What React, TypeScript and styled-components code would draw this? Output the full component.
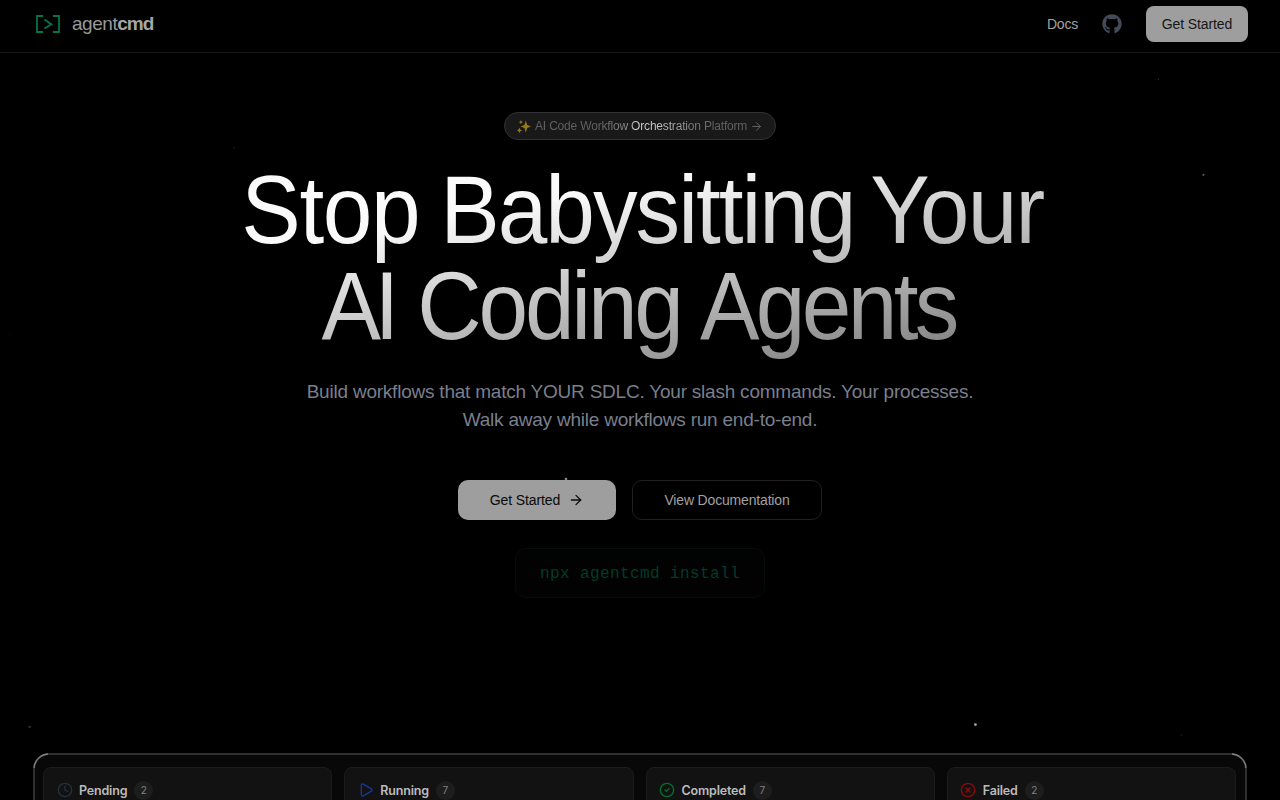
import * as React from 'react';
import styled, { createGlobalStyle } from 'styled-components';
import { ArrowRight, CircleCheck, CircleX, Clock, Play } from 'lucide-react';
import { FaGithub } from 'react-icons/fa';

const STARS = [
  { x: 1203.5, y: 174.8, r: 1.1, color: '#5c5c5c' },
  { x: 1158.5, y: 79.3, r: 0.7, color: '#2c2c2c' },
  { x: 234, y: 147.7, r: 0.7, color: '#262626' },
  { x: 10, y: 334, r: 0.6, color: '#161616' },
  { x: 30.5, y: 22, r: 0.6, color: '#161616' },
  { x: 566, y: 479, r: 1.3, color: '#8a8a8a' },
  { x: 975.4, y: 724.6, r: 1.4, color: '#a6a6a6' },
  { x: 29.7, y: 726.8, r: 1.1, color: '#3a3a3a' },
  { x: 1181.3, y: 735, r: 0.8, color: '#262626' },
];

const COLUMNS = [
  { title: 'Pending', count: 2, color: '#262f40', Icon: Clock },
  { title: 'Running', count: 7, color: '#17369c', Icon: Play },
  { title: 'Completed', count: 7, color: '#04702f', Icon: CircleCheck },
  { title: 'Failed', count: 2, color: '#8e090d', Icon: CircleX },
];

const LogoMark = () => (
  <svg width="24" height="18" viewBox="0 0 24 18" fill="none" stroke="#04734f" strokeWidth="1.8">
    <path d="M7 1H1v16h6M17 1h6v16h-6" />
    <path d="M8.4 4.4l7 4.8-7 4.4" />
  </svg>
);

const Sparkles = () => (
  <svg width="14" height="13" viewBox="0 0 14 13" fill="#94791f">
    <path d="M8.8 .6L10.2 5l3.8 1.5-3.8 1.5-1.4 4.4L7.4 8 3.6 6.5 7.4 5z" />
    <path d="M3.9 0l.7 1.5 1.5.6-1.5.6-.7 1.5-.7-1.5-1.5-.6 1.5-.6z" />
    <path d="M2.4 7.6l.8 2 1.9.8-1.9.8-.8 2-.8-2-1.6-.8 1.6-.8z" />
  </svg>
);

const App: React.FC = () => {
  return (
    <S.Page>
      <GlobalStyle />
      <S.Sky width="1280" height="800" aria-hidden>
        {STARS.map(star => (
          <circle key={star.x} cx={star.x} cy={star.y} r={star.r} fill={star.color} />
        ))}
      </S.Sky>
      <S.Header>
        <S.Logo>
          <LogoMark />
          <S.LogoText>
            agent<b>cmd</b>
          </S.LogoText>
        </S.Logo>
        <S.Nav>
          <S.NavLink>Docs</S.NavLink>
          <FaGithub size={20} color="#454a59" />
          <S.NavButton>Get Started</S.NavButton>
        </S.Nav>
      </S.Header>
      <S.Hero>
        <S.Badge>
          <Sparkles />
          <S.BadgeText>AI Code Workflow Orchestration Platform</S.BadgeText>
          <ArrowRight size={13} strokeWidth={1.7} />
        </S.Badge>
        <S.Title>
          <S.TitleLine $left={5.2}>
            <S.Word $track={-1.6}>Stop</S.Word>{' '}
            <S.Word $track={-2.2} $lead={-3.9}>Babysitting</S.Word>{' '}
            <S.Word $track={-1.9} $lead={-9.8}>Your</S.Word>
          </S.TitleLine>
          <S.TitleLine $right={3}>
            <S.Word $track={-7}>AI</S.Word>{' '}
            <S.Word $track={-3.5} $lead={-0.4}>Coding</S.Word>{' '}
            <S.Word $track={-4} $lead={-5.9}>Agents</S.Word>
          </S.TitleLine>
        </S.Title>
        <S.Lead>
          Build workflows that match YOUR SDLC. Your slash commands. Your processes.
          <br />
          Walk away while workflows run end-to-end.
        </S.Lead>
        <S.Actions>
          <S.PrimaryButton>
            Get Started
            <ArrowRight size={16} strokeWidth={1.9} />
          </S.PrimaryButton>
          <S.OutlineButton>View Documentation</S.OutlineButton>
        </S.Actions>
        <S.Command>npx agentcmd install</S.Command>
      </S.Hero>
      <S.Board>
        <S.Glint width="18" height="18" viewBox="0 0 18 18">
          <path d="M1 15A15 15 0 0 1 15 1" />
        </S.Glint>
        <S.Glint $right width="18" height="18" viewBox="0 0 18 18">
          <path d="M3 1A15 15 0 0 1 17 15" />
        </S.Glint>
        {COLUMNS.map(({ title, count, color, Icon }) => (
          <S.Column key={title}>
            <Icon size={16} color={color} strokeWidth={2} />
            <S.ColumnTitle>{title}</S.ColumnTitle>
            <S.Count>{count}</S.Count>
          </S.Column>
        ))}
      </S.Board>
    </S.Page>
  );
};

const GlobalStyle = createGlobalStyle`
  * {
    box-sizing: border-box;
  }
  body {
    margin: 0;
    background: #000;
    overflow: hidden;
  }
`;

const Button = styled.button`
  display: flex;
  align-items: center;
  justify-content: center;
  border: 0;
  padding: 0;
  font: 14px 'Liberation Sans', Arial, sans-serif;
  letter-spacing: -0.1px;
`;

const S = {
  Page: styled.div`
    position: relative;
    display: flex;
    flex-direction: column;
    height: 800px;
    overflow: hidden;
    background: #000;
    color: #a0a0a0;
    font-family: 'Liberation Sans', Arial, sans-serif;
  `,
  Sky: styled.svg`
    position: absolute;
    inset: 0;
  `,
  Header: styled.header`
    display: flex;
    align-items: center;
    justify-content: space-between;
    flex: none;
    height: 53px;
    padding: 6px 32px 10px 36px;
    border-bottom: 1px solid #181818;
  `,
  Logo: styled.div`
    display: flex;
    align-items: center;
    gap: 12px;
  `,
  LogoText: styled.span`
    font-size: 19px;
    line-height: 28px;
    letter-spacing: -0.45px;
    color: #989898;

    b {
      letter-spacing: -1px;
      color: #a6a6a6;
    }
  `,
  Nav: styled.nav`
    display: flex;
    align-items: center;
    gap: 24px;
  `,
  NavLink: styled.a`
    font-size: 14px;
    letter-spacing: -0.2px;
  `,
  NavButton: styled(Button)`
    width: 102px;
    height: 36px;
    border-radius: 8px;
    background: #9e9e9e;
    color: #161616;
  `,
  Hero: styled.main`
    position: relative;
    display: flex;
    flex-direction: column;
    align-items: center;
    flex: none;
    height: 700px;
    padding: 59px 32px 0;
  `,
  Badge: styled.div`
    display: flex;
    align-items: center;
    width: 272px;
    height: 28px;
    padding-left: 12px;
    border: 1px solid #323232;
    border-radius: 14px;
    background: #191919;
    color: #666;

    svg:last-child {
      margin-left: 3px;
    }
  `,
  BadgeText: styled.span`
    margin-left: 4px;
    font-size: 12px;
    letter-spacing: -0.18px;
    white-space: nowrap;
    background: linear-gradient(90deg, #626262 30%, #858585 42%, #d0d0d0 48%, #c4c4c4 60%, #767676 75%, #626262 84%);
    background-clip: text;
    color: transparent;
  `,
  Title: styled.h1`
    align-self: stretch;
    margin: 22px 0 0;
    padding-bottom: 8px;
    font-size: 96px;
    font-weight: 400;
    line-height: 96px;
    text-align: center;
    background: linear-gradient(to bottom right, #fafafa 30%, rgba(250, 250, 250, 0.4));
    background-clip: text;
    color: transparent;
    transform: scaleX(0.93);
  `,
  TitleLine: styled.div<{ $left?: number; $right?: number }>`
    padding: 0 ${p => p.$right || 0}px 0 ${p => p.$left || 0}px;
    white-space: nowrap;
  `,
  Word: styled.span<{ $track: number; $lead?: number }>`
    margin-left: ${p => p.$lead || 0}px;
    letter-spacing: ${p => p.$track}px;
  `,
  Lead: styled.p`
    margin: 16px 0 0;
    font-size: 19px;
    line-height: 28px;
    letter-spacing: -0.22px;
    text-align: center;
    color: #7a7f8d;
  `,
  Actions: styled.div`
    display: flex;
    gap: 16px;
    margin-top: 46px;
  `,
  PrimaryButton: styled(Button)`
    gap: 8px;
    width: 158px;
    height: 40px;
    border-radius: 10px;
    background: #9e9e9e;
    color: #0a0a0a;
  `,
  OutlineButton: styled(Button)`
    width: 190px;
    height: 40px;
    border: 1px solid #202020;
    border-radius: 10px;
    background: #000;
    letter-spacing: -0.17px;
    color: #a0a0a0;
  `,
  Command: styled.code`
    margin-top: 28px;
    padding: 2px 24px 0;
    border: 1px solid #050c0a;
    border-radius: 10px;
    background: #020202;
    font: 16px/46px 'Liberation Mono', monospace;
    letter-spacing: 0.4px;
    color: #003c2a;
  `,
  Board: styled.section`
    position: relative;
    display: grid;
    grid-template-columns: repeat(4, 1fr);
    gap: 12px;
    flex: none;
    height: 300px;
    margin: 0 33px;
    padding: 12px 9px 12px 8px;
    border: 2px solid #303030;
    border-radius: 16px;
    background: #080808;
  `,
  Glint: styled.svg<{ $right?: boolean }>`
    position: absolute;
    top: -2px;
    ${p => (p.$right ? 'right: -2px;' : 'left: -2px;')}
    fill: none;
    stroke: #808080;
    stroke-width: 1.3;
  `,
  Column: styled.div`
    display: flex;
    align-items: flex-start;
    padding: 14px 12px 14px 12.5px;
    border: 1px solid #1c1c1c;
    border-radius: 8px;
    background: #121212;
  `,
  ColumnTitle: styled.h3`
    margin: 1px 0 0 6.5px;
    font: 600 12.5px/16px Inter, sans-serif;
    letter-spacing: -0.18px;
    color: #bcbcbc;
  `,
  Count: styled.span`
    display: flex;
    align-items: center;
    justify-content: center;
    width: 19px;
    height: 19px;
    margin: -1px 0 0 7px;
    padding-bottom: 1px;
    border-radius: 50%;
    background: #1d1d1d;
    font: 10px Inter, sans-serif;
    color: #808080;
  `,
};

export default App;
